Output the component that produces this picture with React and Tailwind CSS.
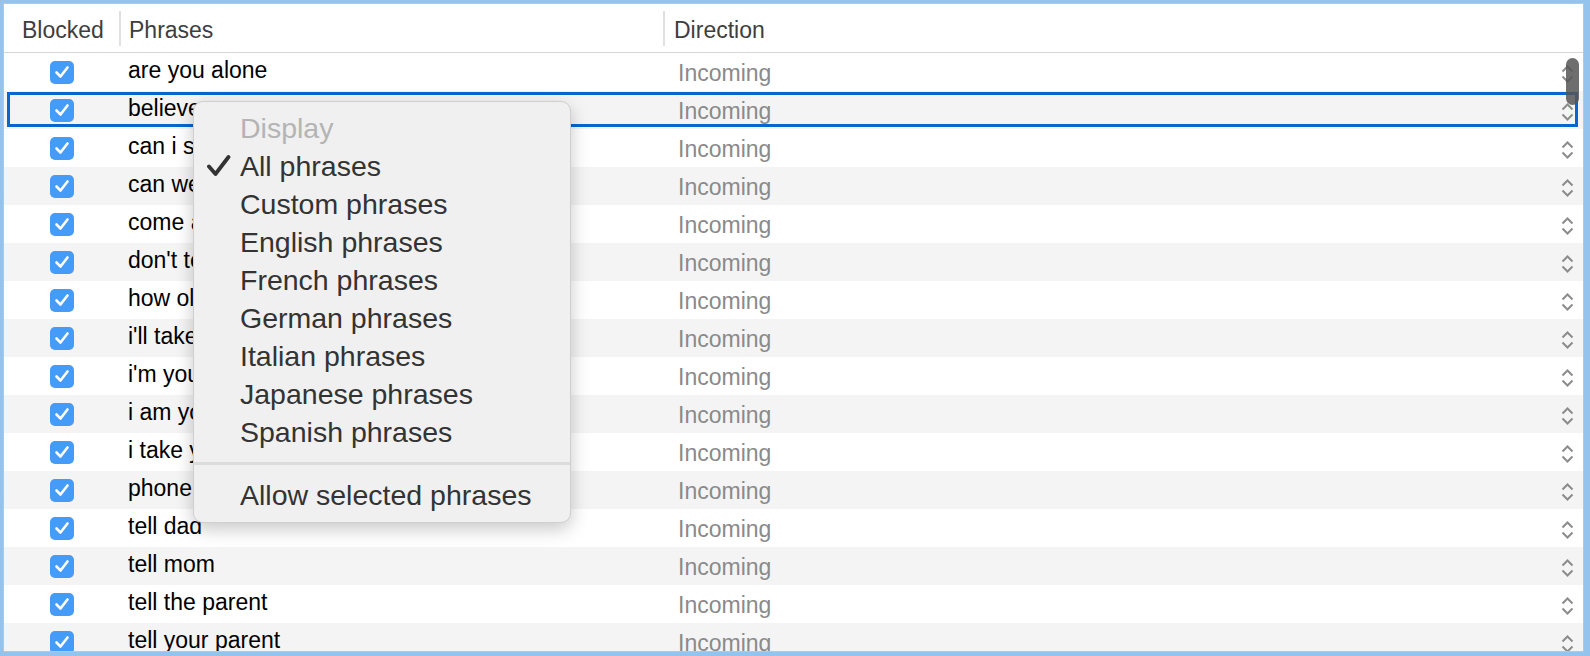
const phrases = [
  'are you alone',
  'believe me',
  'can i see you',
  'can we meet',
  'come alone',
  "don't tell anyone",
  'how old are you',
  "i'll take care of you",
  "i'm your friend",
  'i am your friend',
  'i take you',
  'phone number',
  'tell dad',
  'tell mom',
  'tell the parent',
  'tell your parent',
];

const menuItems = [
  'Custom phrases',
  'English phrases',
  'French phrases',
  'German phrases',
  'Italian phrases',
  'Japanese phrases',
  'Spanish phrases',
];

function Checkbox() {
  return (
    <div className="w-[24px] h-[23px] rounded-[5px] bg-[#459cf8] flex items-center justify-center">
      <svg width="16" height="14" viewBox="0 0 16 14" fill="none">
        <polyline
          points="2.5,7.5 6.5,11.5 13.5,2.5"
          stroke="white"
          strokeWidth="2.6"
          strokeLinecap="round"
          strokeLinejoin="round"
        />
      </svg>
    </div>
  );
}

function Stepper() {
  return (
    <svg width="13" height="22" viewBox="0 0 13 22" fill="none">
      <polyline points="1.5,8.5 6.5,3.5 11.5,8.5" stroke="#8c8c8c" strokeWidth="2" />
      <polyline points="1.5,13.5 6.5,18.5 11.5,13.5" stroke="#8c8c8c" strokeWidth="2" />
    </svg>
  );
}

function Row({ text, index }) {
  const selected = index === 1;
  return (
    <div
      className={`relative flex items-center h-[38px] shrink-0 ${
        index % 2 === 1 ? 'bg-[#f4f4f4]' : 'bg-white'
      }`}
    >
      <div className="w-[115px] pl-[46px] flex items-center">
        <Checkbox />
      </div>
      <div className="w-[544px] pl-[9px] pb-[3px] text-[23px] text-black whitespace-nowrap">
        {text}
      </div>
      <div className="flex-1 flex items-center justify-between pl-[15px] pr-[9px]">
        <span className="pt-[3px] text-[23px] text-[#8a8a8a]">Incoming</span>
        <span className="pt-[3px]">
          <Stepper />
        </span>
      </div>
      {selected && (
        <div className="absolute left-[3px] right-[5px] top-[1px] bottom-[2px] border-[3.5px] border-[#0a64d2]" />
      )}
    </div>
  );
}

function ContextMenu() {
  return (
    <div className="absolute left-[189px] top-[97px] w-[378px] rounded-[10px] border border-[#cfcfcf] bg-[#f0f0f0] pt-[7px] pb-[8px] shadow-[0_6px_18px_rgba(0,0,0,0.22)] text-[28.5px] text-[#333333]">
      <div className="h-[38px] flex items-center pl-[46px] text-[#b4b4b4]">Display</div>
      <div className="relative h-[38px] flex items-center pl-[46px]">
        <svg
          className="absolute left-[13px] top-[8px]"
          width="24"
          height="22"
          viewBox="0 0 24 22"
          fill="none"
        >
          <path
            d="M2 11.5 L8.5 19 L21.5 2"
            stroke="#333"
            strokeWidth="3.8"
            strokeLinecap="round"
            strokeLinejoin="round"
          />
        </svg>
        All phrases
      </div>
      {menuItems.map(item => (
        <div key={item} className="h-[38px] flex items-center pl-[46px]">
          {item}
        </div>
      ))}
      <div className="my-[11px] h-[3px] bg-[#dcdcdc]" />
      <div className="h-[38px] flex items-center pl-[46px]">Allow selected phrases</div>
    </div>
  );
}

export default function App() {
  return (
    <div className="w-[1590px] h-[656px] bg-[#94c4ee] pt-[3px] pl-[3px] pr-[6px] pb-[4px] font-['Liberation_Sans',Arial,sans-serif]">
      <div className="relative h-full bg-white border border-[#c4c4c4] overflow-hidden flex flex-col">
        <div className="flex items-center h-[49px] shrink-0 border-b border-[#d6d6d6] text-[23px] text-[#3e3e3e]">
          <div className="w-[115px] pl-[18px] pt-[5px]">Blocked</div>
          <div className="w-[2px] h-[35px] bg-[#e0e0e0]" />
          <div className="w-[542px] pl-[8px] pt-[5px]">Phrases</div>
          <div className="w-[2px] h-[35px] bg-[#e0e0e0]" />
          <div className="pl-[9px] pt-[5px]">Direction</div>
        </div>

        {phrases.map((text, i) => (
          <Row key={text} text={text} index={i} />
        ))}

        <div className="absolute right-[4px] top-[54px] w-[13px] h-[47px] rounded-full bg-[#555555]/85" />

        <ContextMenu />
      </div>
    </div>
  );
}
